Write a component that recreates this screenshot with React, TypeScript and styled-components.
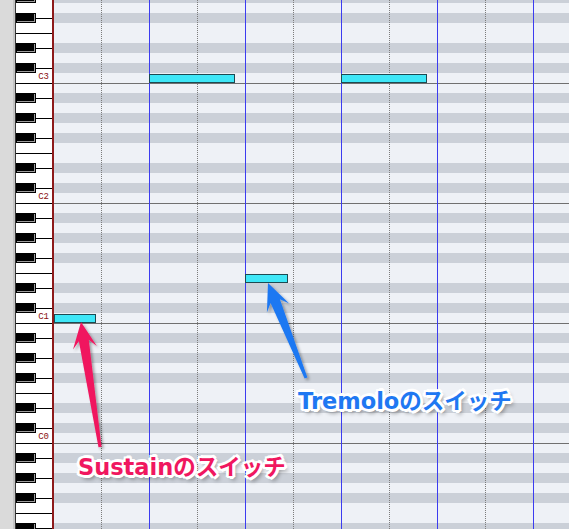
import styled, { createGlobalStyle } from 'styled-components'

const GlobalStyle = createGlobalStyle`
  html, body {
    margin: 0;
    padding: 0;
    background: #fff;
  }
  body {
    font-family: "Liberation Sans", sans-serif;
  }
`

// one semitone lane is 10px, an octave 120px; the roll scrolls so that
// the C3 lane starts at y = 73
const ROW = 10
const C3_TOP = 73
const FIRST_OCTAVE = 3
const OCTAVES = [3, 2, 1, 0, -1]

const Roll = styled.div`
  position: relative;
  display: flex;
  width: 569px;
  height: 529px;
  overflow: hidden;
  background: #eef1f6;
`

const Gutter = styled.div`
  flex: 0 0 13px;
  background: #dadada;
  border-right: 2px solid #c4c4c4;
`

const Keyboard = styled.div`
  flex: 0 0 39px;
  box-sizing: border-box;
  border-left: 1px solid #333;
  border-right: 2px solid #8e1b1b;
  background: #fff;
  overflow: hidden;
`

const Column = styled.div`
  display: flex;
  flex-direction: column;
  margin-top: ${C3_TOP + ROW - 12 * ROW * (FIRST_OCTAVE - 2)}px;
`

const Octave = styled.div`
  position: relative;
  display: flex;
  flex-direction: column;
  flex: 0 0 120px;
`

const WhiteKey = styled.div<{ $h: number }>`
  display: flex;
  align-items: flex-end;
  justify-content: flex-end;
  height: ${p => p.$h}px;
  box-sizing: border-box;
  border-top: 1px solid #000;
  background: #fff;
`

const KeyLabel = styled.span`
  padding: 0 3px 1px 0;
  font-family: "Liberation Mono", monospace;
  font-size: 9px;
  line-height: 9px;
  color: #8a1010;
`

const BlackKey = styled.div<{ $top: number }>`
  position: absolute;
  left: 0;
  top: ${p => p.$top}px;
  width: 20px;
  height: 10px;
  box-sizing: border-box;
  background: #000;
  border: 1px solid #000;
  box-shadow: inset -1px -1px 0 #9c9c9c;
`

const Grid = styled.div`
  position: relative;
  flex: 1;
  overflow: hidden;
`

const Lane = styled.div<{ $black: boolean; $cLine: boolean }>`
  flex: 0 0 ${ROW}px;
  box-sizing: border-box;
  background: ${p => (p.$black ? '#cbd0d8' : '#eef1f6')};
  border-top: ${p => (p.$cLine ? '1px solid #707070' : 'none')};
`

const Bars = styled.div`
  position: absolute;
  inset: 0;
  display: flex;
  pointer-events: none;
`

const Bar = styled.div`
  position: relative;
  flex: 0 0 96px;
  background: linear-gradient(to left, #3c3cf0 0 1px, transparent 1px);

  &::after {
    content: '';
    position: absolute;
    top: 0;
    bottom: 0;
    left: 47px;
    width: 1px;
    background: repeating-linear-gradient(to bottom, #7c7c7c 0 1px, transparent 1px 2px);
  }
`

const Note = styled.div<{ $pitch: number; $start: number; $len: number }>`
  position: absolute;
  left: ${p => p.$start}px;
  top: ${p => C3_TOP - p.$pitch * ROW + 1}px;
  width: ${p => p.$len}px;
  height: 9px;
  box-sizing: border-box;
  background: #3fe7f7;
  border: 1px solid #1d4a52;
`

const Overlay = styled.svg`
  position: absolute;
  inset: 0;
  pointer-events: none;
`

const Callout = styled.div<{ $color: string; $x: number; $y: number }>`
  position: absolute;
  left: ${p => p.$x}px;
  top: ${p => p.$y}px;
  font-family: "DejaVu Sans", "Noto Sans CJK JP", sans-serif;
  font-weight: 700;
  font-size: 22.5px;
  line-height: 1;
  white-space: nowrap;
  color: ${p => p.$color};
  text-shadow:
    2px 0 0 #fff, -2px 0 0 #fff, 0 2px 0 #fff, 0 -2px 0 #fff,
    2px 2px 0 #fff, -2px -2px 0 #fff, 2px -2px 0 #fff, -2px 2px 0 #fff,
    3px 1px 0 #fff, -3px 1px 0 #fff, 1px 3px 0 #fff, 1px -3px 0 #fff,
    3px 4px 4px rgba(0, 0, 0, 0.45);
`

// white keys of one octave, top (B) to bottom (C)
const WHITE = [
  { name: 'B', h: 15 },
  { name: 'A', h: 20 },
  { name: 'G', h: 20 },
  { name: 'F', h: 15 },
  { name: 'E', h: 15 },
  { name: 'D', h: 20 },
  { name: 'C', h: 15 },
]
const BLACK_TOPS = [10, 30, 50, 80, 100]
// lanes top to bottom: B A# A G# G F# F E D# D C# C
const LANES = [false, true, false, true, false, true, false, false, true, false, true, false]

function arrowPath(tx: number, ty: number, hx: number, hy: number, tailW: number, neckW: number, headW: number, headLen: number) {
  const dx = hx - tx
  const dy = hy - ty
  const len = Math.hypot(dx, dy)
  const ux = dx / len
  const uy = dy / len
  const nx = -uy
  const ny = ux
  const pt = (along: number, side: number) =>
    `${(tx + ux * along + nx * side).toFixed(1)} ${(ty + uy * along + ny * side).toFixed(1)}`
  const neck = len - headLen * 0.72
  const barb = len - headLen
  return [
    'M' + pt(0, tailW / 2),
    'L' + pt(neck, neckW / 2),
    'L' + pt(barb, headW / 2),
    'L' + pt(len, 0),
    'L' + pt(barb, -headW / 2),
    'L' + pt(neck, -neckW / 2),
    'L' + pt(0, -tailW / 2),
    'Z',
  ].join(' ')
}

export default function App() {
  return (
    <>
      <GlobalStyle />
      <Roll>
        <Gutter />
        <Keyboard>
          <Column>
            {OCTAVES.map(o => (
              <Octave key={o}>
                {WHITE.map(k => (
                  <WhiteKey key={k.name} $h={k.h}>
                    {k.name === 'C' && o >= 0 && <KeyLabel>C{o}</KeyLabel>}
                  </WhiteKey>
                ))}
                {BLACK_TOPS.map(t => (
                  <BlackKey key={t} $top={t} />
                ))}
              </Octave>
            ))}
          </Column>
        </Keyboard>
        <Grid>
          <Column>
            {OCTAVES.map(o => (
              <Octave key={o}>
                {LANES.map((black, i) => (
                  <Lane key={i} $black={black} $cLine={i === 0} />
                ))}
              </Octave>
            ))}
          </Column>
          <Bars>
            {[0, 1, 2, 3, 4, 5].map(i => (
              <Bar key={i} />
            ))}
          </Bars>
          <Note $pitch={0} $start={95} $len={86} />
          <Note $pitch={0} $start={287} $len={86} />
          <Note $pitch={-20} $start={191} $len={43} />
          <Note $pitch={-24} $start={0} $len={42} />
        </Grid>
        <Overlay width="569" height="529" viewBox="0 0 569 529">
          <defs>
            <filter id="shade" x="-30%" y="-30%" width="160%" height="160%">
              <feDropShadow dx="2" dy="2" stdDeviation="1.5" floodColor="#000" floodOpacity="0.35" />
            </filter>
          </defs>
          <path d={arrowPath(100, 447, 81, 322, 3, 10, 24, 26)} fill="#f0175f" filter="url(#shade)" />
          <path d={arrowPath(306, 378, 268, 283, 3, 10, 24, 27)} fill="#1f78f2" filter="url(#shade)" />
        </Overlay>
        <Callout $color="#1f78f2" $x={298} $y={390}>Tremoloのスイッチ</Callout>
        <Callout $color="#f0175f" $x={78} $y={456}>Sustainのスイッチ</Callout>
      </Roll>
    </>
  )
}
